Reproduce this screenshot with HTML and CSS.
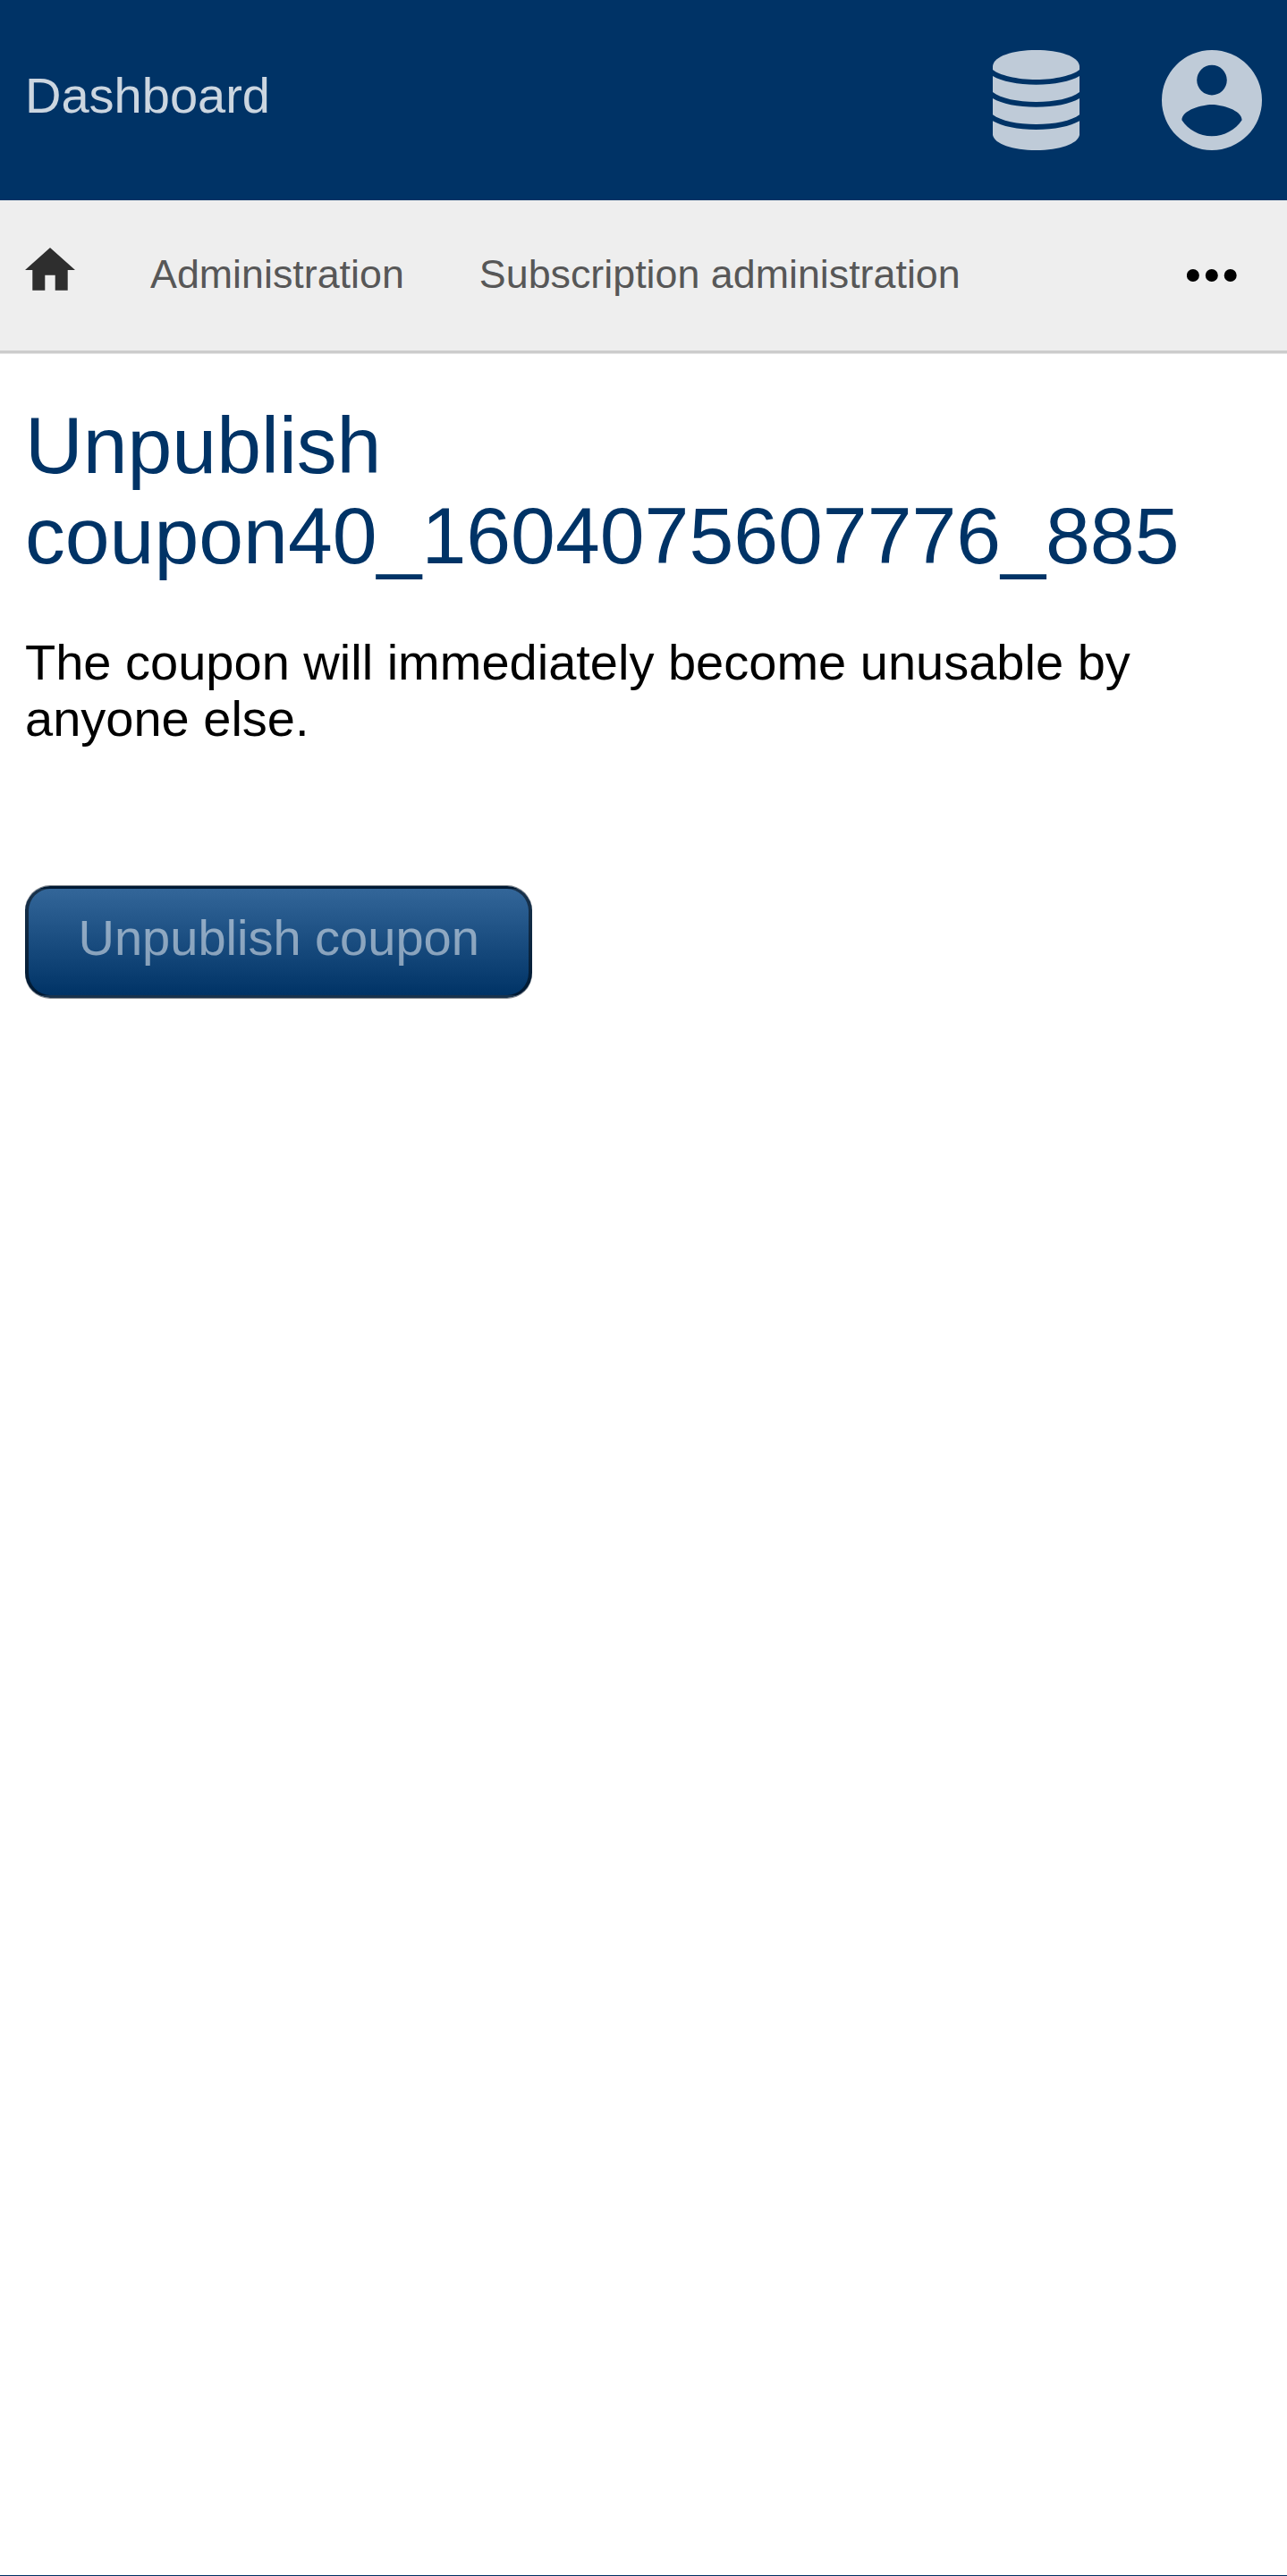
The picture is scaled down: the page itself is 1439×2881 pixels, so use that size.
FILE: index.html
```html
<!DOCTYPE html>
<html lang="en">
<head>
<meta charset="utf-8">
<title>Unpublish coupon</title>
<link rel="stylesheet" href="styles.css">
</head>
<body>
<header class="topbar">
  <a class="brand">Dashboard</a>
  <div class="tools">
    <svg class="icon-db" viewBox="0 0 97 112" aria-hidden="true">
      <path d="M0 18C1 7 22 0 48.5 0S96 7 97 18V22C90 28 70 33 48.5 33S7 28 0 22Z"/>
      <path d="M0 29C10 35 28 38.7 48.5 38.7S87 35 97 29V47C88 54 69 58 48.5 58S9 54 0 47Z"/>
      <path d="M0 54C10 60 28 63.8 48.5 63.8S87 60 97 54V72.2C88 79 69 83 48.5 83S9 79 0 72.2Z"/>
      <path d="M0 79.2C10 85 28 89 48.5 89S87 85 97 79.2V95C95 105 75 112 48.5 112S2 105 0 95Z"/>
    </svg>
    <svg class="icon-user" viewBox="2 2 20 20" aria-hidden="true">
      <path fill-rule="evenodd" d="M12 2a10 10 0 1 0 0 20a10 10 0 1 0 0-20zM12 5a3 3 0 1 1 0 6a3 3 0 1 1 0-6zM12 19.2c-2.5 0-4.71-1.28-6-3.22.03-1.99 4-3.08 6-3.08 1.99 0 5.97 1.09 6 3.08-1.29 1.94-3.5 3.22-6 3.22z"/>
    </svg>
  </div>
</header>
<nav class="crumbs">
  <svg class="icon-home" viewBox="0 0 56 48" aria-hidden="true">
    <path d="M28 0L56 25H47.7V47.7H33.7V30.7H22.3V47.7H8.3V25H0Z"/>
  </svg>
  <a class="crumb">Administration</a>
  <a class="crumb">Subscription administration</a>
  <svg class="icon-more" viewBox="0 0 56 14" aria-hidden="true">
    <circle cx="6.9" cy="7" r="7"/><circle cx="27.8" cy="7" r="7"/><circle cx="48.7" cy="7" r="7"/>
  </svg>
</nav>
<main class="content">
  <h1 class="title">Unpublish coupon40_1604075607776_885</h1>
  <p class="message">The coupon will immediately become unusable by anyone else.</p>
  <button class="action" type="button">Unpublish coupon</button>
</main>
<footer class="footer"></footer>
</body>
</html>
```
FILE: styles.css
```css
* {
  box-sizing: border-box;
}

body {
  display: flex;
  flex-direction: column;
  min-height: 2881px;
  margin: 0;
  background: #fff;
  color: #000;
  font: 56px/63px "Liberation Sans", Arial, sans-serif;
}

.topbar {
  display: flex;
  justify-content: space-between;
  height: 224px;
  padding: 56px 28px;
  background: #003366;
}

.brand {
  padding-top: 19px;
  color: rgba(255, 255, 255, 0.8);
}

.tools {
  display: flex;
  gap: 92px;
  fill: rgba(255, 255, 255, 0.75);
}

.icon-db {
  width: 97px;
  height: 112px;
}

.icon-user {
  width: 112px;
  height: 112px;
}

.crumbs {
  display: flex;
  gap: 84px;
  height: 171px;
  padding: 53px 56px 0 28px;
  border-bottom: 3px solid #ccc;
  background: #eee;
  box-shadow: 0 1px #e6e6e6;
}

.icon-home {
  width: 56px;
  height: 48px;
  fill: #2e2e2e;
}

.crumb {
  padding-top: 3px;
  color: #575757;
  font-size: 44.8px;
  line-height: 52.5px;
}

.icon-more {
  width: 56px;
  height: 14px;
  margin: 24px 0 0 auto;
}

.content {
  flex: 1;
  padding: 53px 28px 0;
}

.title {
  margin: 0;
  color: #003366;
  font-size: 89.6px;
  font-weight: normal;
  line-height: 101px;
}

.message {
  margin: 59px 0 0;
}

.action {
  display: block;
  height: 125px;
  margin-top: 156px;
  padding: 0 55.5px 10px;
  border: solid rgba(0, 0, 0, 0.5);
  border-width: 3px 4px;
  border-radius: 28px;
  background: linear-gradient(#336699, #003366);
  box-shadow: 0 -1px rgba(0, 12, 25, 0.5), 0 1px rgba(0, 12, 25, 0.5);
  color: rgba(255, 255, 255, 0.5);
  font: inherit;
}

.footer {
  height: 1px;
  background: #003366;
}
```
